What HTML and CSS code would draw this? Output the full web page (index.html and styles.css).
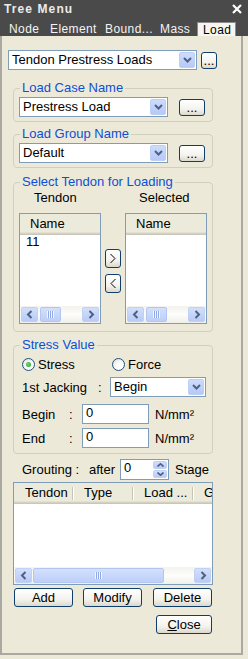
FILE: index.html
```html
<!DOCTYPE html>
<html>
<head>
<meta charset="utf-8">
<title>Tree Menu</title>
<link rel="stylesheet" href="styles.css">
</head>
<body>
<div class="app">
  <div class="titlebar">
    <span class="title">Tree Menu</span>
    <svg class="close-x" width="10" height="10" viewBox="0 0 10 10"><path d="M1 1L9 9M9 1L1 9" stroke="#fff" stroke-width="2.2"/></svg>
  </div>
  <div class="tabs">
    <span class="tab t-node">Node</span>
    <span class="tab t-elem">Element</span>
    <span class="tab t-bound">Bound...</span>
    <span class="tab t-mass">Mass</span>
    <span class="tab active">Load</span>
  </div>
  <div class="panel">
    <div class="top-row">
      <div class="combo combo-top"><span class="combo-text">Tendon Prestress Loads</span><span class="drop"><svg width="9" height="6" viewBox="0 0 9 6"><path d="M1 1L4.5 4.5L8 1" fill="none" stroke="#4d6185" stroke-width="2"/></svg></span></div>
      <button class="btn btn-dots-s">...</button>
    </div>

    <fieldset class="group g1">
      <legend>Load Case Name</legend>
      <div class="combo-row">
        <div class="combo combo-mid"><span class="combo-text">Prestress Load</span><span class="drop"><svg width="9" height="6" viewBox="0 0 9 6"><path d="M1 1L4.5 4.5L8 1" fill="none" stroke="#4d6185" stroke-width="2"/></svg></span></div>
        <button class="btn btn-dots">...</button>
      </div>
    </fieldset>

    <fieldset class="group g2">
      <legend>Load Group Name</legend>
      <div class="combo-row">
        <div class="combo combo-mid"><span class="combo-text">Default</span><span class="drop"><svg width="9" height="6" viewBox="0 0 9 6"><path d="M1 1L4.5 4.5L8 1" fill="none" stroke="#4d6185" stroke-width="2"/></svg></span></div>
        <button class="btn btn-dots">...</button>
      </div>
    </fieldset>

    <fieldset class="group g3">
      <legend>Select Tendon for Loading</legend>
      <div class="sel-labels">
        <span class="sel-lbl l-left">Tendon</span>
        <span class="sel-lbl l-right">Selected</span>
      </div>
      <div class="sel-row">
        <div class="listbox">
          <div class="lb-head">Name</div>
          <div class="lb-body"><div class="lb-item">11</div></div>
          <div class="hscroll">
            <span class="sb-btn"><svg width="8" height="9" viewBox="0 0 8 9"><path d="M5.5 1L2 4.5L5.5 8" fill="none" stroke="#4d6185" stroke-width="2"/></svg></span>
            <span class="sb-track"><span class="sb-thumb thumb-s"><span class="grip"></span></span></span>
            <span class="sb-btn"><svg width="8" height="9" viewBox="0 0 8 9"><path d="M2.5 1L6 4.5L2.5 8" fill="none" stroke="#4d6185" stroke-width="2"/></svg></span>
          </div>
        </div>
        <div class="move-btns">
          <button class="btn btn-move"><svg width="8" height="11" viewBox="0 0 8 11"><path d="M1.5 1L6 5.5L1.5 10" fill="none" stroke="#000" stroke-width="1"/></svg></button>
          <button class="btn btn-move"><svg width="8" height="11" viewBox="0 0 8 11"><path d="M6.5 1L2 5.5L6.5 10" fill="none" stroke="#000" stroke-width="1"/></svg></button>
        </div>
        <div class="listbox">
          <div class="lb-head">Name</div>
          <div class="lb-body"></div>
          <div class="hscroll">
            <span class="sb-btn"><svg width="8" height="9" viewBox="0 0 8 9"><path d="M5.5 1L2 4.5L5.5 8" fill="none" stroke="#4d6185" stroke-width="2"/></svg></span>
            <span class="sb-track"><span class="sb-thumb thumb-s"><span class="grip"></span></span></span>
            <span class="sb-btn"><svg width="8" height="9" viewBox="0 0 8 9"><path d="M2.5 1L6 4.5L2.5 8" fill="none" stroke="#4d6185" stroke-width="2"/></svg></span>
          </div>
        </div>
      </div>
    </fieldset>

    <fieldset class="group g4">
      <legend>Stress Value</legend>
      <div class="radio-row">
        <label class="radio r-stress"><span class="rcircle checked"><span class="rdot"></span></span>Stress</label>
        <label class="radio r-force"><span class="rcircle"></span>Force</label>
      </div>
      <div class="field-row jack-row">
        <span class="lbl-j">1st Jacking</span><span class="colon-j">:</span>
        <div class="combo combo-jack"><span class="combo-text">Begin</span><span class="drop"><svg width="9" height="6" viewBox="0 0 9 6"><path d="M1 1L4.5 4.5L8 1" fill="none" stroke="#4d6185" stroke-width="2"/></svg></span></div>
      </div>
      <div class="field-row begin-row">
        <span class="lbl-b">Begin</span><span class="colon-b">:</span>
        <div class="textbox">0</div><span class="unit">N/mm²</span>
      </div>
      <div class="field-row end-row">
        <span class="lbl-b">End</span><span class="colon-b">:</span>
        <div class="textbox">0</div><span class="unit">N/mm²</span>
      </div>
    </fieldset>

    <div class="grout-row">
      <span class="lbl-g">Grouting :</span>
      <span class="lbl-after">after</span>
      <div class="spinner">
        <span class="spin-val">0</span>
        <span class="spin-btns">
          <span class="spin-b"><svg width="7" height="4" viewBox="0 0 7 4"><path d="M0.5 3.5L3.5 0.8L6.5 3.5" fill="none" stroke="#4d6185" stroke-width="1.6"/></svg></span>
          <span class="spin-b"><svg width="7" height="4" viewBox="0 0 7 4"><path d="M0.5 0.5L3.5 3.2L6.5 0.5" fill="none" stroke="#4d6185" stroke-width="1.6"/></svg></span>
        </span>
      </div>
      <span class="lbl-stage">Stage</span>
    </div>

    <div class="listview">
      <div class="lv-head">
        <span class="col">Tendon</span><i class="sep"></i>
        <span class="col">Type</span><i class="sep"></i>
        <span class="col">Load ...</span><i class="sep"></i>
        <span class="col">G</span>
      </div>
      <div class="lv-body"></div>
      <div class="hscroll">
        <span class="sb-btn"><svg width="8" height="9" viewBox="0 0 8 9"><path d="M5.5 1L2 4.5L5.5 8" fill="none" stroke="#4d6185" stroke-width="2"/></svg></span>
        <span class="sb-track"><span class="sb-thumb thumb-l"><span class="grip"></span></span></span>
        <span class="sb-btn"><svg width="8" height="9" viewBox="0 0 8 9"><path d="M2.5 1L6 4.5L2.5 8" fill="none" stroke="#4d6185" stroke-width="2"/></svg></span>
      </div>
    </div>

    <div class="action-row">
      <button class="btn btn-act">Add</button>
      <button class="btn btn-act">Modify</button>
      <button class="btn btn-act">Delete</button>
    </div>
    <div class="close-row">
      <button class="btn btn-close"><u>C</u>lose</button>
    </div>
  </div>
</div>
</body>
</html>
```

FILE: styles.css
```css
* { box-sizing: border-box; }
html, body { margin: 0; padding: 0; }
body {
  width: 248px;
  height: 659px;
  overflow: hidden;
  background: #ece9d8;
  font-family: "Liberation Sans", Arial, sans-serif;
  font-size: 13px;
  color: #000;
}
.app { width: 248px; }

.titlebar {
  height: 18px;
  background: #4a4a4a;
  display: flex;
  align-items: center;
  justify-content: space-between;
  padding: 0 6px 0 4px;
}
.title {
  color: #ebebeb;
  font-weight: bold;
  font-size: 12px;
  letter-spacing: 1.1px;
}
.close-x { display: block; }

.tabs {
  height: 18px;
  background: #4a4a4a;
  display: flex;
  align-items: flex-end;
  padding-left: 9px;
  color: #f4f4f4;
  font-size: 12px;
  letter-spacing: 0.4px;
  white-space: nowrap;
}
.tab { line-height: 14px; height: 14px; flex: none; }
.t-node { width: 41px; }
.t-elem { width: 55px; }
.t-bound { width: 55px; }
.t-mass { width: 37px; }
.tab.active {
  width: 39px;
  background: #f6f5f0;
  color: #000;
  border: 1px solid #8c8c8c;
  border-bottom: none;
  padding: 0 0 0 5px;
}

.panel {
  width: 243px;
  height: 619px;
  border-left: 2px solid #a9a9a2;
  border-right: 2px solid #a9a9a2;
  border-bottom: 2px solid #a9a9a2;
  display: flex;
  flex-direction: column;
  align-items: flex-start;
}

.top-row {
  margin: 14px 0 0 6px;
  display: flex;
  align-items: center;
  gap: 4px;
}

.combo {
  height: 20px;
  border: 1px solid #7f9db9;
  background: #fff;
  display: flex;
  align-items: stretch;
}
.combo-text {
  flex: 1;
  padding-left: 3px;
  line-height: 18px;
  white-space: nowrap;
  overflow: hidden;
}
.drop {
  width: 16px;
  margin: 1px;
  border-radius: 2px;
  background: linear-gradient(#cddcfd, #b6c9f5);
  border: 1px solid #bccff7;
  display: flex;
  align-items: center;
  justify-content: center;
}
.drop svg { display: block; }
.combo-top { width: 189px; }
.combo-mid { width: 149px; }
.combo-jack { width: 96px; }

.btn {
  font-family: inherit;
  font-size: 13px;
  color: #000;
  border: 1px solid #0f3e6e;
  border-radius: 3px;
  background: linear-gradient(#ffffff, #f4f3ee 60%, #dcd8cb);
  padding: 0;
  margin: 0;
  display: flex;
  align-items: center;
  justify-content: center;
}
.btn-dots-s {
  width: 16px;
  height: 17px;
  align-items: flex-end;
  line-height: 12px;
  padding-bottom: 1px;
}
.btn-dots {
  width: 26px;
  height: 17px;
  align-items: flex-end;
  line-height: 12px;
  padding-bottom: 1px;
}

.group {
  margin: 0 0 0 11px;
  width: 200px;
  min-width: 0;
  border: 1px solid #d0d0bf;
  border-radius: 4px;
  padding: 2px 5px 4px 5px;
}
.group legend {
  color: #0d4fd8;
  line-height: 14px;
  padding: 0 2px;
  margin-left: 1px;
}
.g1 { margin-top: 11px; }
.g2 { margin-top: 5px; }
.g3 { margin-top: 7px; padding-top: 0; padding-bottom: 7px; }
.g4 { margin-top: 6px; padding-top: 0; padding-bottom: 5px; }

.combo-row {
  display: flex;
  align-items: flex-start;
}
.combo-row .btn-dots { margin: 2px 0 0 11px; }

.sel-labels {
  display: flex;
  padding-top: 1px;
  margin-bottom: 7px;
  line-height: 16px;
}
.l-left { padding-left: 15px; width: 106px; }
.l-right { padding-left: 14px; }

.sel-row {
  display: flex;
  align-items: flex-start;
  gap: 4px;
}
.listbox {
  width: 82px;
  height: 111px;
  border: 1px solid #7f9db9;
  background: #fff;
  display: flex;
  flex-direction: column;
}
.lb-head {
  height: 21px;
  flex: none;
  background: #ebeadb;
  border-bottom: 1px solid #cbc7b8;
  box-shadow: inset 0 -1px #d6d2c2, inset 0 -2px #e2e0d4;
  padding-left: 10px;
  line-height: 20px;
}
.lb-body { flex: 1; }
.lb-item { padding-left: 6px; line-height: 14px; }

.move-btns {
  display: flex;
  flex-direction: column;
  gap: 6px;
  margin-top: 36px;
}
.btn-move { width: 16px; height: 19px; }
.btn-move svg { display: block; }

.hscroll {
  height: 17px;
  flex: none;
  display: flex;
  background: linear-gradient(#f3f2ec, #fdfdfb 50%, #f0efe8);
}
.sb-btn {
  width: 17px;
  flex: none;
  margin: 1px;
  border: 1px solid #c0d1f5;
  border-radius: 2px;
  background: linear-gradient(#d2dffc, #b9cbf5);
  display: flex;
  align-items: center;
  justify-content: center;
}
.sb-btn svg { display: block; }
.sb-track { flex: 1; display: flex; }
.sb-thumb {
  margin: 1px 0;
  border: 1px solid #b3c6f2;
  border-radius: 2px;
  background: linear-gradient(#d3e0fd, #bdcff8);
  display: flex;
  align-items: center;
  justify-content: center;
}
.thumb-s { width: 21px; margin-left: 1px; }
.thumb-l { width: 131px; }
.grip {
  width: 7px;
  height: 7px;
  background: repeating-linear-gradient(to right, #f2f6ff 0 1px, #8fa9e6 1px 2px);
}

.radio-row {
  display: flex;
  margin-top: 5px;
  height: 15px;
  align-items: center;
}
.radio {
  display: flex;
  align-items: center;
  gap: 3px;
  line-height: 15px;
}
.r-stress { margin-left: 3px; width: 90px; }
.rcircle {
  width: 13px;
  height: 13px;
  border-radius: 50%;
  border: 1px solid #1c5180;
  background: radial-gradient(circle at 65% 65%, #ffffff 30%, #dcdad0);
  display: flex;
  align-items: center;
  justify-content: center;
}
.rdot {
  width: 5px;
  height: 5px;
  border-radius: 50%;
  background: radial-gradient(circle at 40% 40%, #6fd56f, #21a121);
}

.field-row {
  display: flex;
  align-items: center;
  height: 20px;
  padding-left: 3px;
}
.jack-row { margin-top: 5px; }
.begin-row { margin-top: 7px; }
.end-row { margin-top: 4px; }
.lbl-j { width: 76px; }
.colon-j { width: 12px; }
.lbl-b { width: 47px; }
.colon-b { width: 13px; }
.textbox {
  width: 67px;
  height: 20px;
  border: 1px solid #7f9db9;
  background: #fff;
  padding: 0 0 0 3px;
  line-height: 16px;
}
.unit { margin-left: 6px; }

.grout-row {
  margin-top: 5px;
  height: 21px;
  display: flex;
  align-items: center;
  padding-left: 20px;
}
.lbl-g { width: 67px; }
.lbl-after { width: 31px; }
.spinner {
  width: 49px;
  height: 21px;
  border: 1px solid #7f9db9;
  background: #fff;
  display: flex;
}
.spin-val { flex: 1; padding-left: 3px; line-height: 16px; }
.spin-btns {
  width: 16px;
  display: flex;
  flex-direction: column;
  padding: 1px;
  gap: 1px;
}
.spin-b {
  flex: 1;
  border: 1px solid #c0d1f5;
  border-radius: 2px;
  background: linear-gradient(#d2dffc, #b9cbf5);
  display: flex;
  align-items: center;
  justify-content: center;
}
.spin-b svg { display: block; }
.lbl-stage { margin-left: 6px; }

.listview {
  margin: 2px 0 0 11px;
  width: 200px;
  height: 103px;
  border: 1px solid #7f9db9;
  background: #fff;
  display: flex;
  flex-direction: column;
  overflow: hidden;
}
.lv-head {
  height: 21px;
  flex: none;
  display: flex;
  align-items: center;
  background: #ebeadb;
  border-bottom: 1px solid #cbc7b8;
  box-shadow: inset 0 -1px #d6d2c2, inset 0 -2px #e2e0d4;
  white-space: nowrap;
}
.col {
  flex: none;
  width: 58px;
  padding-left: 10px;
  line-height: 20px;
}
.col:first-child { padding-left: 11px; }
.sep {
  flex: none;
  width: 2px;
  height: 13px;
  background: linear-gradient(to right, #c7c5b2 50%, #ffffff 50%);
}
.lv-body { flex: 1; }

.action-row {
  margin: 3px 0 0 12px;
  display: flex;
}
.btn-act { width: 59px; height: 19px; }
.action-row .btn-act + .btn-act { margin-left: 10px; }
.action-row .btn-act:last-child { margin-left: 11px; }

.close-row { margin: 8px 0 0 154px; }
.btn-close { width: 56px; height: 19px; }
```
